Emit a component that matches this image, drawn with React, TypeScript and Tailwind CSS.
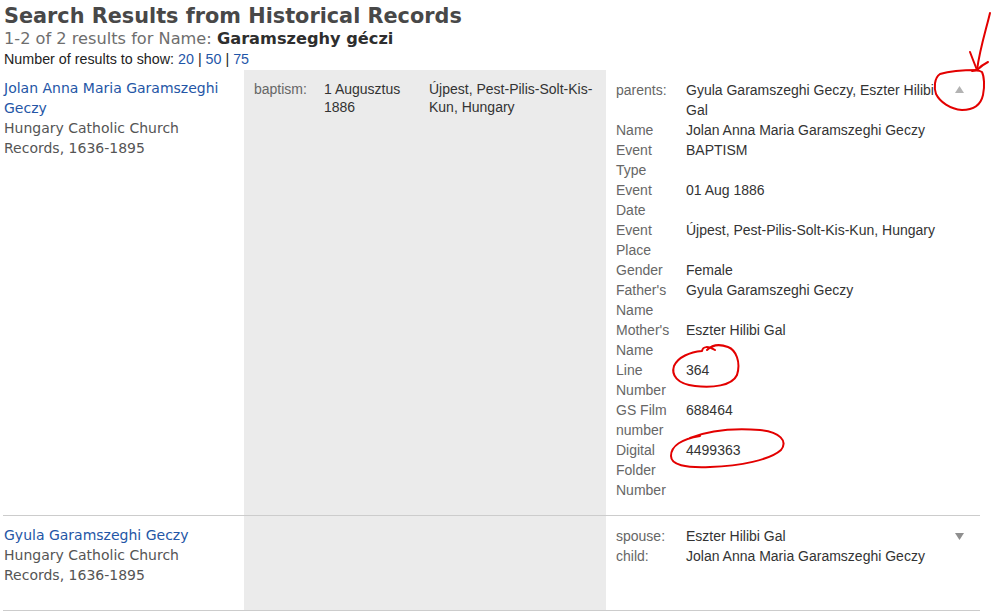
import React from "react";

const verdana = { fontFamily: '"DejaVu Sans", Verdana, sans-serif' };

function Tri({ up }: { up: boolean }) {
  return (
    <svg width="9" height="7" viewBox="0 0 9 7" className="block">
      {up ? <polygon points="4.5,0 9,7 0,7" fill="#b3b3b3" /> : <polygon points="0,0 9,0 4.5,7" fill="#8f8f8f" />}
    </svg>
  );
}

const details: [string, string][] = [
  ["Name", "Jolan Anna Maria Garamszeghi Geczy"],
  ["Event Type", "BAPTISM"],
  ["Event Date", "01 Aug 1886"],
  ["Event Place", "Újpest, Pest-Pilis-Solt-Kis-Kun, Hungary"],
  ["Gender", "Female"],
  ["Father's Name", "Gyula Garamszeghi Geczy"],
  ["Mother's Name", "Eszter Hilibi Gal"],
  ["Line Number", "364"],
  ["GS Film number", "688464"],
  ["Digital Folder Number", "4499363"],
];

function Annotations() {
  return (
    <svg className="absolute left-0 top-0 pointer-events-none" width="992" height="616" viewBox="0 0 992 616" fill="none" stroke="#e30000" strokeWidth="2" strokeLinecap="round" strokeLinejoin="round">
      <path d="M990 13 C 986 30, 980 48, 977 70" />
      <path d="M970 52 C 973 60, 975 65, 977 70" />
      <path d="M988 62 C 984 64, 980 67, 977 70" />
      <path d="M977 70 C 965 70, 950 71, 940 74 C 934 78, 934 88, 936 94 C 940 102, 950 109, 962 110 C 974 110, 981 104, 983 95 C 985 86, 984 76, 982 72 C 979 70, 976 70, 972 71" />
      <path d="M715 350 C 708 346, 703 346, 702 351 C 690 352, 678 357, 674 366 C 671 375, 677 384, 695 386 C 712 388, 732 386, 737 375 C 741 362, 736 350, 728 347 C 720 344, 712 345, 707 350" />
      <path d="M700 436 C 682 439, 671 446, 671 456 C 671 465, 685 468, 710 467 C 740 466, 770 460, 781 450 C 788 441, 780 432, 760 430 C 735 428, 710 430, 690 438" />
    </svg>
  );
}

export default function App() {
  return (
    <div className="relative w-[992px] h-[616px] overflow-hidden bg-white">
      <div className="pl-[3px]">
        <h1 className="pl-[1px] text-[20.8px] leading-[26px] font-bold text-[#484848] pt-[3px]" style={verdana}>
          Search Results from Historical Records
        </h1>
        <div className="pl-[1px] text-[16.2px] leading-[20px] text-[#6e6e6e]" style={verdana}>
          1-2 of 2 results for Name: <span className="font-bold text-[#2e2e2e]">Garamszeghy géczi</span>
        </div>
        <div className="pl-[1px] text-[14.3px] leading-[21px] text-[#222] font-['Liberation_Sans',Arial,sans-serif]">
          Number of results to show: <span className="text-[#1f56a8]">20</span> | <span className="text-[#1f56a8]">50</span> | <span className="text-[#1f56a8]">75</span>
        </div>

        <div className="grid grid-cols-[241px_362px_374px] w-[977px] font-['Liberation_Sans',Arial,sans-serif] text-[14px]">
          {/* Row 1 */}
          <div className="border-b border-[#cccccc] pl-[1px] pr-[10px] pt-[8px] pb-[26px] leading-[20px]" style={verdana}>
            <div className="text-[#2456a6] text-[14px]">Jolan Anna Maria Garamszeghi Geczy</div>
            <div className="text-[#555] text-[14px]">Hungary Catholic Church Records, 1636-1895</div>
          </div>
          <div className="bg-[#ebebeb] border-b border-[#cccccc] pl-[10px] pr-[10px] pt-[10px] leading-[18px] flex">
            <div className="w-[70px] text-[#666]">baptism:</div>
            <div className="w-[105px] text-[#333] pr-[10px]">1 Augusztus 1886</div>
            <div className="flex-1 text-[#333]">Újpest, Pest-Pilis-Solt-Kis-Kun, Hungary</div>
          </div>
          <div className="border-b border-[#cccccc] pl-[10px] pt-[10px] pb-[15px] leading-[20px] flex">
            <div className="w-[329px] grid grid-cols-[70px_1fr]">
              <div className="text-[#666]">parents:</div>
              <div className="text-[#333] pr-[10px]">Gyula Garamszeghi Geczy, Eszter Hilibi Gal</div>
              {details.map(([k, v]) => (
                <React.Fragment key={k}>
                  <div className="text-[#666] pr-[6px]">{k}</div>
                  <div className="text-[#333]">{v}</div>
                </React.Fragment>
              ))}
            </div>
            <div className="pt-[6px] pl-[10px]"><Tri up /></div>
          </div>

          {/* Row 2 */}
          <div className="border-b border-[#cccccc] pl-[1px] pr-[10px] pt-[9px] pb-[25px] leading-[20px]" style={verdana}>
            <div className="text-[#2456a6] text-[14px]">Gyula Garamszeghi Geczy</div>
            <div className="text-[#555] text-[14px]">Hungary Catholic Church Records, 1636-1895</div>
          </div>
          <div className="bg-[#ebebeb] border-b border-[#cccccc]"></div>
          <div className="border-b border-[#cccccc] pl-[10px] pt-[10px] leading-[20px] flex">
            <div className="w-[329px] grid grid-cols-[70px_1fr] content-start">
              <div className="text-[#666]">spouse:</div>
              <div className="text-[#333]">Eszter Hilibi Gal</div>
              <div className="text-[#666]">child:</div>
              <div className="text-[#333]">Jolan Anna Maria Garamszeghi Geczy</div>
            </div>
            <div className="pt-[7px] pl-[10px]"><Tri up={false} /></div>
          </div>
        </div>
      </div>
      <Annotations />
    </div>
  );
}
